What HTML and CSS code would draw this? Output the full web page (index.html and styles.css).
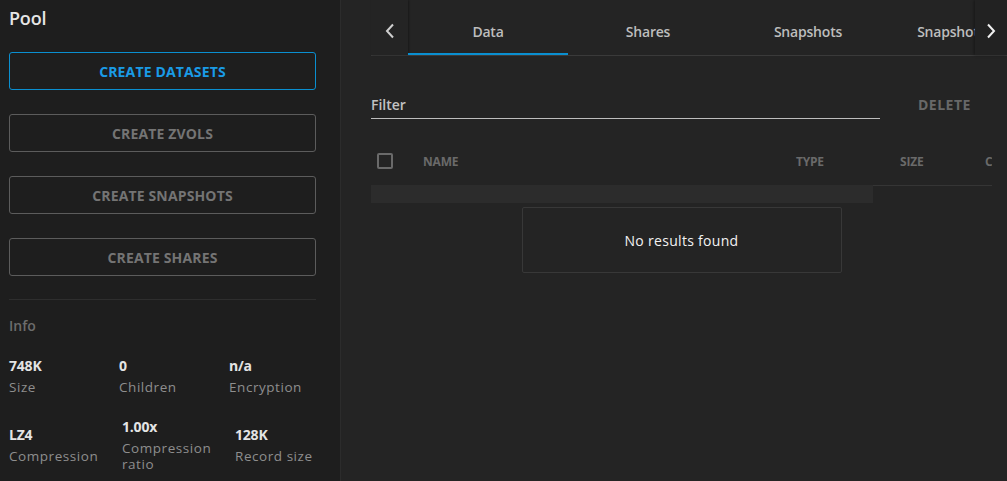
FILE: index.html
```html
<!DOCTYPE html>
<html>
<head>
<meta charset="utf-8">
<link rel="stylesheet" href="styles.css">
</head>
<body>
<aside class="sidebar">
  <h1 class="title">Pool</h1>
  <div class="actions">
    <button class="btn btn-primary">CREATE DATASETS</button>
    <button class="btn">CREATE ZVOLS</button>
    <button class="btn">CREATE SNAPSHOTS</button>
    <button class="btn">CREATE SHARES</button>
  </div>
  <hr class="divider">
  <h2 class="info-title">Info</h2>
  <div class="info-row">
    <div class="info-item w110"><div class="val">748K</div><div class="lbl">Size</div></div>
    <div class="info-item w110"><div class="val">0</div><div class="lbl">Children</div></div>
    <div class="info-item"><div class="val">n/a</div><div class="lbl">Encryption</div></div>
  </div>
  <div class="info-row row2">
    <div class="info-item w113"><div class="val">LZ4</div><div class="lbl">Compression</div></div>
    <div class="info-item w113"><div class="val">1.00x</div><div class="lbl">Compression<br>ratio</div></div>
    <div class="info-item"><div class="val">128K</div><div class="lbl">Record size</div></div>
  </div>
</aside>
<main class="main">
  <div class="tabbar">
    <div class="tab-arrow left">
      <svg width="12" height="16" viewBox="0 0 12 16"><path d="M9 1.5 L3 8 L9 14.5" fill="none" stroke="#cfcfcf" stroke-width="2"/></svg>
    </div>
    <div class="tabs">
      <div class="tab active">Data</div>
      <div class="tab">Shares</div>
      <div class="tab">Snapshots</div>
      <div class="tab">Snapshot Tasks</div>
    </div>
    <div class="tab-arrow right">
      <svg width="12" height="16" viewBox="0 0 12 16"><path d="M3 1.5 L9 8 L3 14.5" fill="none" stroke="#f0f0f0" stroke-width="2"/></svg>
    </div>
  </div>
  <div class="toolbar">
    <div class="filter">Filter</div>
    <div class="delete">DELETE</div>
  </div>
  <div class="table">
    <div class="thead">
      <div class="cell check"><span class="checkbox"></span></div>
      <div class="cell name">NAME</div>
      <div class="cell type">TYPE</div>
      <div class="cell size">SIZE</div>
      <div class="cell more">C</div>
    </div>
    <div class="loading-bar"></div>
    <div class="empty-wrap">
      <div class="empty">No results found</div>
    </div>
  </div>
</main>
</body>
</html>
```
FILE: styles.css
```css
* { box-sizing: border-box; }
html, body { margin: 0; padding: 0; }
body {
  width: 1007px;
  height: 481px;
  overflow: hidden;
  display: flex;
  font-family: "Open Sans", "Noto Sans", sans-serif;
  background: #242424;
}
.sidebar {
  width: 341px;
  flex: none;
  background: #1e1e1e;
  border-right: 1px solid #2c2c2c;
  padding: 0 24px 0 9px;
}
.title {
  margin: 0;
  padding-top: 5px;
  height: 52px;
  font-size: 18px;
  font-weight: 600;
  color: #e6e6e6;
  line-height: 26px;
  letter-spacing: -0.2px;
}
.actions {
  display: flex;
  flex-direction: column;
  gap: 24px;
}
.btn {
  width: 307px;
  height: 38px;
  background: transparent;
  border: 1px solid #5c5c5c;
  border-radius: 3px;
  color: #747474;
  font-family: inherit;
  font-size: 14px;
  font-weight: 700;
  letter-spacing: 0.15px;
  padding: 0;
}
.btn-primary {
  border-color: #0a8fd0;
  color: #1a9be6;
}
.divider {
  margin: 23px 0 0;
  border: 0;
  border-top: 1px solid #2e2e2e;
  height: 0;
}
.info-title {
  margin: 0;
  padding-top: 16px;
  height: 57px;
  font-size: 14px;
  font-weight: 600;
  color: #6c6c6c;
  line-height: 20px;
}
.info-row {
  display: flex;
  align-items: center;
}
.info-row.row2 {
  margin-top: 23px;
}
.w110 { width: 110px; }
.w113 { width: 113px; }
.val {
  font-size: 14px;
  font-weight: 700;
  color: #e4e4e4;
  line-height: 18px;
  letter-spacing: -0.2px;
}
.lbl {
  margin-top: 4px;
  font-size: 13.5px;
  color: #8e8e8e;
  line-height: 16px;
  letter-spacing: 0.55px;
}
.main {
  flex: 1;
  min-width: 0;
  padding: 0 15px 0 30px;
}
.tabbar {
  display: flex;
  height: 56px;
  margin-right: -15px;
  border-bottom: 1px solid #3a3a3a;
}
.tab-arrow {
  flex: none;
  display: flex;
  align-items: center;
  justify-content: center;
  padding-top: 7px;
  height: 55px;
}
.tab-arrow.left {
  width: 37px;
  box-shadow: 1px 0 2px rgba(0,0,0,0.35);
}
.tab-arrow.right {
  width: 32px;
  background: #222;
  box-shadow: -1px 0 3px rgba(0,0,0,0.4);
}
.tabs {
  flex: 1;
  display: flex;
  overflow: hidden;
}
.tab {
  flex: none;
  width: 160px;
  height: 55px;
  display: flex;
  align-items: center;
  justify-content: center;
  padding-top: 7px;
  font-size: 14px;
  font-weight: 600;
  color: #bdbdbd;
  white-space: nowrap;
  letter-spacing: -0.2px;
}
.tab.active {
  border-bottom: 2px solid #0a8fd0;
  padding-top: 9px;
}
.toolbar {
  display: flex;
  align-items: flex-end;
  height: 63px;
}
.filter {
  width: 509px;
  height: 24px;
  border-bottom: 1px solid #bdbdbd;
  font-size: 14px;
  font-weight: 600;
  color: #c2c2c2;
  line-height: 16px;
  padding-top: 2px;
}
.delete {
  margin-left: 38px;
  margin-bottom: 2px;
  font-size: 14px;
  font-weight: 700;
  color: #686868;
  line-height: 16px;
  letter-spacing: 0.5px;
  height: 20px;
}
.table {
  margin-top: 18px;
}
.thead {
  display: flex;
  align-items: center;
  height: 49px;
  border-bottom: 1px solid #353535;
  overflow: hidden;
}
.cell {
  font-size: 12px;
  font-weight: 700;
  color: #6a6a6a;
  letter-spacing: -0.2px;
  white-space: nowrap;
}
.check { width: 52px; padding-left: 6px; display: flex; }
.checkbox {
  width: 16px;
  height: 16px;
  border: 2px solid #6a6a6a;
  border-radius: 2px;
}
.name { width: 373px; }
.type { width: 104px; }
.size { width: 85px; }
.more { width: 7px; overflow: hidden; }
.loading-bar {
  width: 502px;
  height: 18px;
  margin-top: -1px;
  background: #2c2c2c;
}
.empty-wrap {
  display: flex;
  justify-content: center;
  padding-top: 4px;
}
.empty {
  width: 320px;
  height: 66px;
  border: 1px solid #383838;
  border-radius: 2px;
  display: flex;
  align-items: center;
  justify-content: center;
  font-size: 14px;
  letter-spacing: 0.3px;
  color: #f2f2f2;
}
```
